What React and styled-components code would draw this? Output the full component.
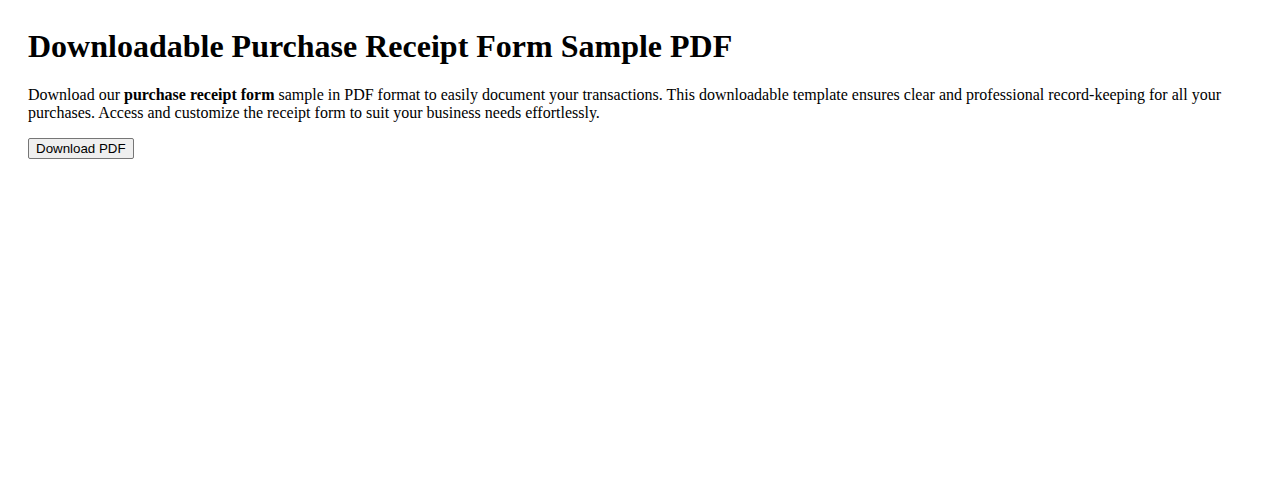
import React from "react";
import styled, { createGlobalStyle } from "styled-components";

const GlobalStyle = createGlobalStyle`
  body {
    margin: 8px;
    font-family: "Liberation Serif", "Times New Roman", serif;
    color: #000;
    background: #fff;
  }
`;

const Page = styled.main`
  padding: 20px;
`;

const Title = styled.h1`
  margin: 0 0 21.44px;
  font-size: 32px;
  font-weight: bold;
`;

const Intro = styled.p`
  margin: 16px 0;
  font-size: 16px;
  line-height: normal;
`;

const DownloadButton = styled.button`
  font-family: "Liberation Sans", Arial, sans-serif;
  font-size: 13.333px;
  padding: 2px 7px;
  border: 1px solid #767676;
  border-radius: 2px;
  background: #efefef;
  color: #000;
  cursor: pointer;
`;

export default function App() {
  return (
    <>
      <GlobalStyle />
      <Page>
        <Title>Downloadable Purchase Receipt Form Sample PDF</Title>
        <Intro>
          Download our <strong>purchase receipt form</strong> sample in PDF format to easily document your
          transactions. This downloadable template ensures clear and professional record-keeping for all your
          purchases. Access and customize the receipt form to suit your business needs effortlessly.
        </Intro>
        <DownloadButton type="button">Download PDF</DownloadButton>
      </Page>
    </>
  );
}
